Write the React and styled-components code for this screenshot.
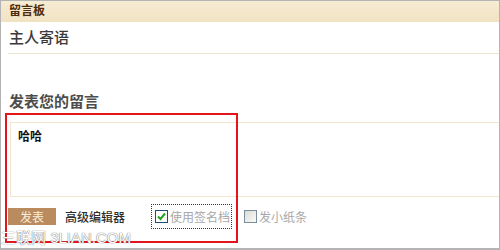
import styled, { createGlobalStyle } from 'styled-components'

const Global = createGlobalStyle`
  body {
    margin: 0;
    background: #fff;
    font-family: "Liberation Sans", "Noto Sans CJK SC", sans-serif;
  }
`

const Frame = styled.div`
  position: relative;
  width: 500px;
  height: 250px;
  box-sizing: border-box;
  border: 1px solid #b4b4b4;
  border-bottom-width: 2px;
  overflow: hidden;
`

const Header = styled.div`
  height: 21px;
  padding-left: 8px;
  line-height: 21px;
  font-size: 12px;
  font-weight: bold;
  color: #4e2a0c;
  background: linear-gradient(#f6ecd3, #f1e2c2);
`

const Body = styled.div`
  padding-left: 7px;
`

const Heading = styled.div`
  font-size: 15px;
  color: ${p => p.$dark ? '#3a3a3a' : '#4c4c4c'};
  font-weight: ${p => p.$bold ? 'bold' : 500};
  line-height: 20px;
  padding: ${p => p.$pad};
  border-bottom: ${p => p.$line ? '1px solid #ece3cd' : 'none'};
`

const Editor = styled.div`
  margin: 0 0 0 2px;
  height: 75px;
  border: 1px solid #f0e7ce;
  border-right: none;
  padding: 7px 7px;
  box-sizing: border-box;
  font-size: 12px;
  line-height: 14px;
  font-weight: bold;
  color: #111;
`

const Toolbar = styled.div`
  display: flex;
  align-items: center;
  height: 17px;
  margin-top: 11px;
  font-size: 12px;
`

const SendButton = styled.button`
  width: 48px;
  height: 17px;
  padding: 0;
  border: none;
  background: #b98b5e;
  color: #fbeedd;
  font: 12px "Noto Sans CJK SC", sans-serif;
  line-height: 17px;
`

const Link = styled.span`
  margin-left: 9px;
  color: #2e2e2e;
  font-weight: 500;
`

const Option = styled.label`
  display: flex;
  align-items: center;
  gap: 2px;
  margin-left: ${p => p.$ml}px;
  padding: 3px 1px 3px 3px;
  border: 1px dotted ${p => p.$focus ? '#333' : 'transparent'};
  color: #a8a8a8;
`

const Box = styled.span`
  display: flex;
  align-items: center;
  justify-content: center;
  width: 11px;
  height: 11px;
  border: 1px solid ${p => p.$on ? '#1d4f7c' : '#7a8ea0'};
  background: ${p => p.$on ? '#fff' : 'linear-gradient(135deg, #dcdcd6, #fafaf8)'};
`

const Mark = styled.div`
  position: absolute;
  left: 4px;
  top: 112px;
  width: 229px;
  height: 126px;
  border: 2px solid #e3141c;
`

const Watermark = styled.div`
  position: absolute;
  left: 0;
  top: 228px;
  font: 15px "Liberation Sans", "Noto Sans CJK SC", sans-serif;
  line-height: 18px;
  color: #fff;
  text-shadow: 0 0 1px #666, 0 0 1px #888;
`

const Check = () => (
  <svg width="9" height="9" viewBox="0 0 9 9">
    <path d="M1 4.5 L3.5 7 L8 1.5" fill="none" stroke="#21a31c" strokeWidth="2" />
  </svg>
)

export default function App() {
  return (
    <>
      <Global />
      <Frame>
        <Header>留言板</Header>
        <Body>
          <Heading $dark $line $pad="6px 0 5px 1px">主人寄语</Heading>
          <Heading $bold $pad="38px 0 10px 1px">发表您的留言</Heading>
          <Editor>哈哈</Editor>
          <Toolbar>
            <SendButton>发表</SendButton>
            <Link>高级编辑器</Link>
            <Option $ml={26} $focus>
              <Box $on><Check /></Box>
              使用签名档
            </Option>
            <Option $ml={8}>
              <Box />
              发小纸条
            </Option>
          </Toolbar>
        </Body>
        <Mark />
        <Watermark>三联网 3LIAN.COM</Watermark>
      </Frame>
    </>
  )
}
